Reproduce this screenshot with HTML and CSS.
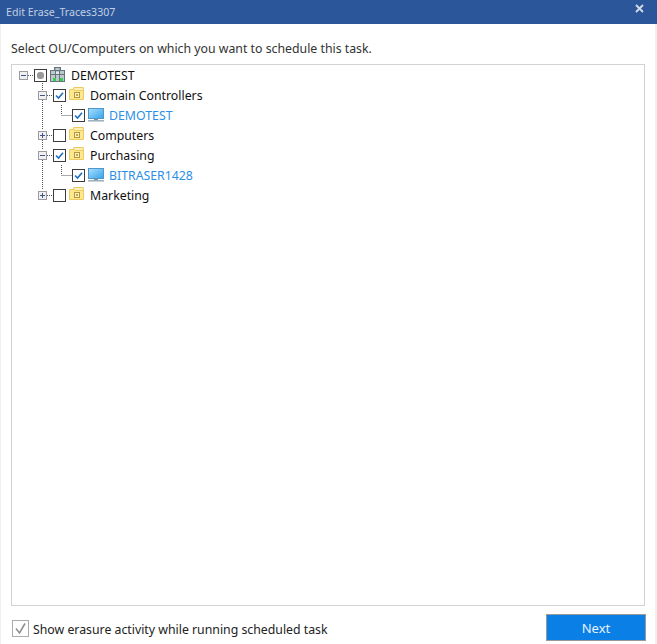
FILE: index.html
```html
<!DOCTYPE html>
<html lang="en">
<head>
<meta charset="utf-8">
<title>Edit Erase_Traces3307</title>
<link rel="stylesheet" href="styles.css">
</head>
<body>
<svg class="defs" width="0" height="0" aria-hidden="true">
  <defs>
    <linearGradient id="screen" x1="0" y1="0" x2="1" y2="1">
      <stop offset="0" stop-color="#a9e0fd"/>
      <stop offset="1" stop-color="#35a2ec"/>
    </linearGradient>
  </defs>
  <symbol id="folder" viewBox="0 0 15 13">
    <path d="M4.500 2V1Q4.500 .5 5 .5H14Q14.500 .5 14.500 1V4H4.500Z" fill="#fdf0bb" stroke="#edc95f"/>
    <path d="M.5 3Q.5 2.500 1 2.500H5L6.500 3.500H14.500V12Q14.500 12.500 14 12.500H.5Z" fill="#fde78f" stroke="#efcb5e"/>
    <rect x="5.500" y="5.500" width="5" height="5" fill="#fef3bf" stroke="#b3963f"/>
    <rect x="7" y="7" width="2" height="2" fill="#c9a63c"/>
  </symbol>
  <symbol id="monitor" viewBox="0 0 16 15">
    <rect x=".5" y=".5" width="15" height="10" fill="url(#screen)" stroke="#4d97c9"/>
    <rect x="6" y="11" width="4" height="1" fill="#7d8f9c"/>
    <rect x="0" y="12" width="16" height="1" fill="#9eb1bf"/>
    <rect x="0" y="13" width="16" height="1" fill="#c9d3da"/>
  </symbol>
  <symbol id="domain" viewBox="0 0 15 15">
    <rect x="4.500" y=".5" width="6" height="4" fill="#9aa9ad" stroke="#64767b"/>
    <rect x=".5" y="3.500" width="14" height="11" fill="#bcc8cb" stroke="#64767b"/>
    <path d="M5.500 3.500V14.500M9.500 3.500V14.500M.5 7.500H14.500" stroke="#64767b" fill="none"/>
    <rect x="6" y="1.500" width="3" height="1" fill="#e4eaec"/>
    <rect x="6" y="5" width="3" height="2" fill="#e4eaec"/>
    <rect x="3" y="11" width="3" height="3" fill="#34d24a"/>
    <rect x="10" y="11" width="3" height="3" fill="#34d24a"/>
  </symbol>
  <symbol id="tick" viewBox="0 0 11 11">
    <path d="M2 5.500L4.500 8L9 2.800" fill="none" stroke="#1d6fc4" stroke-width="1.600"/>
  </symbol>
</svg>

<main class="dialog">
  <header class="titlebar">
    <span class="title">Edit Erase_Traces3307</span>
    <svg class="close" width="9" height="9" viewBox="0 0 9 9"><path d="M1 1L8 8M8 1L1 8" stroke="#d5dbe6" stroke-width="1.800"/></svg>
  </header>

  <div class="content">
    <p class="prompt">Select OU/Computers on which you want to schedule this task.</p>

    <div class="tree">
      <svg class="lines" width="120" height="140" viewBox="0 0 120 140" aria-hidden="true">
        <path d="M16 10.500H22M35 30.500H41M35 70.500H41M35 90.500H41M35 130.500H41M49.500 50.500H60M49.500 110.500H60M30.500 16V25M30.500 35V65M30.500 75V85M30.500 95V125M49.500 40V50M49.500 100V110" fill="none" stroke="#555" stroke-dasharray="1 1"/>
      </svg>

      <div class="row level-0">
        <span class="exp minus"></span>
        <span class="check partial"></span>
        <svg class="icon domain"><use href="#domain"/></svg>
        <span class="label">DEMOTEST</span>
      </div>
      <div class="row level-1">
        <span class="exp minus"></span>
        <span class="check"><svg class="tick"><use href="#tick"/></svg></span>
        <svg class="icon folder"><use href="#folder"/></svg>
        <span class="label">Domain Controllers</span>
      </div>
      <div class="row level-2">
        <span class="check"><svg class="tick"><use href="#tick"/></svg></span>
        <svg class="icon pc"><use href="#monitor"/></svg>
        <span class="label link">DEMOTEST</span>
      </div>
      <div class="row level-1">
        <span class="exp plus"></span>
        <span class="check"></span>
        <svg class="icon folder"><use href="#folder"/></svg>
        <span class="label">Computers</span>
      </div>
      <div class="row level-1">
        <span class="exp minus"></span>
        <span class="check"><svg class="tick"><use href="#tick"/></svg></span>
        <svg class="icon folder"><use href="#folder"/></svg>
        <span class="label">Purchasing</span>
      </div>
      <div class="row level-2">
        <span class="check"><svg class="tick"><use href="#tick"/></svg></span>
        <svg class="icon pc"><use href="#monitor"/></svg>
        <span class="label link">BITRASER1428</span>
      </div>
      <div class="row level-1">
        <span class="exp plus"></span>
        <span class="check"></span>
        <svg class="icon folder"><use href="#folder"/></svg>
        <span class="label">Marketing</span>
      </div>
    </div>

    <footer class="footer">
      <label class="show">
        <span class="big-check"><svg width="15" height="15" viewBox="0 0 15 15"><path d="M3 7.500L6.500 12L12 2.500" fill="none" stroke="#8c8c8c" stroke-width="1.500"/></svg></span>
        <span class="show-text">Show erasure activity while running scheduled task</span>
      </label>
      <button class="next" type="button">Next</button>
    </footer>
  </div>
</main>
</body>
</html>
```

FILE: styles.css
```css
* { box-sizing: border-box; }
html, body { margin: 0; height: 100%; }
body {
  width: 657px;
  height: 644px;
  overflow: hidden;
  background: #fff;
  color: #111;
  font-family: "Noto Sans", "Open Sans", sans-serif;
  font-size: 12.3px;
}
.defs { position: absolute; }
.dialog {
  width: 657px;
  height: 644px;
  display: flex;
  flex-direction: column;
  border-left: 1px solid #f0f0f0;
  border-right: 2px solid #f0f0f0;
}
.titlebar {
  height: 24px;
  margin: 0 -2px 0 -1px;
  padding: 0 13px 1px 6px;
  flex: none;
  display: flex;
  align-items: center;
  justify-content: space-between;
  background: #2b579a;
  color: #c3cfe2;
  font-size: 10.6px;
}
.close { margin-top: -6px; }
.content {
  flex: 1;
  display: flex;
  flex-direction: column;
  padding: 0 10px 3px 10px;
}
.prompt {
  height: 40px;
  margin: 0;
  padding-top: 15px;
  line-height: 20px;
  color: #333;
  flex: none;
}
.tree {
  position: relative;
  height: 542px;
  flex: none;
  border: 1px solid #d2d2d2;
}
.lines { position: absolute; left: 0; top: 0; }
.row {
  position: relative;
  height: 20px;
  display: flex;
  align-items: center;
}
.level-0 { padding-left: 7px; }
.level-1 { padding-left: 26px; }
.level-2 { padding-left: 60px; }
.exp {
  position: relative;
  width: 9px;
  height: 9px;
  margin-right: 6px;
  flex: none;
  background: #f0f0f0;
  border: 1px solid #9a9aa2;
}
.exp::before {
  content: "";
  position: absolute;
  left: 1px;
  top: 3px;
  width: 5px;
  height: 1px;
  background: #3f5488;
}
.plus::after {
  content: "";
  position: absolute;
  left: 3px;
  top: 1px;
  width: 1px;
  height: 5px;
  background: #3f5488;
}
.check {
  width: 13px;
  height: 13px;
  flex: none;
  display: block;
  background: #fff;
  border: 1px solid #3c3c3c;
}
.tick { display: block; width: 11px; height: 11px; }
.partial { position: relative; }
.partial::after {
  content: "";
  position: absolute;
  left: 2px;
  top: 2px;
  width: 7px;
  height: 7px;
  border-radius: 3px;
  background: #999;
}
.icon { flex: none; margin-left: 3px; }
.folder { width: 15px; height: 13px; margin-top: -3px; }
.domain { width: 15px; height: 15px; margin-top: -1px; }
.pc { width: 16px; height: 15px; }
.label { margin-left: 6px; color: #111; white-space: nowrap; }
.pc + .label { margin-left: 5px; }
.link { color: #2b8fe6; }
.footer {
  flex: 1;
  display: flex;
  align-items: flex-start;
  justify-content: space-between;
  padding: 8px 0 0 1px;
}
.show {
  display: flex;
  align-items: center;
  gap: 4px;
  margin-top: 5px;
  color: #222;
}
.show-text { padding-top: 2px; }
.big-check {
  width: 17px;
  height: 17px;
  display: block;
  border: 1px solid #ababab;
}
.big-check svg { display: block; }
.next {
  width: 100px;
  height: 27px;
  margin-right: -1px;
  padding: 0;
  font: inherit;
  font-size: 13px;
  color: #e6f2fd;
  background: #0a7fe6;
  border: 1px solid #999;
}
```
